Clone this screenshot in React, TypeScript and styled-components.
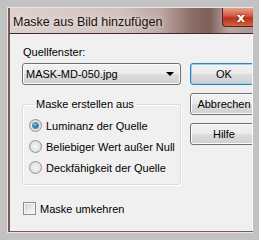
import React from "react";
import styled, { createGlobalStyle } from "styled-components";

const GlobalStyle = createGlobalStyle`
  html, body {
    margin: 0;
    padding: 0;
    background: #c2c2c2;
  }
  body {
    font-family: "Liberation Sans", Arial, sans-serif;
    font-size: 11px;
    color: #000;
  }
`;

const Screen = styled.div`
  width: 259px;
  height: 240px;
  box-sizing: border-box;
  padding: 7px 6px 7px 7px;
  background: #c2c2c2;
  overflow: hidden;
`;

const Window = styled.div`
  height: 100%;
  display: flex;
  flex-direction: column;
  box-sizing: border-box;
  border: 1px solid #e9e4e3;
  border-right: none;
  background: #7a5a54;
  padding: 0 0 1px 2px;
  overflow: hidden;
`;

const TitleBar = styled.div`
  height: 25px;
  flex: none;
  display: flex;
  align-items: flex-start;
  background: linear-gradient(
    90deg,
    #ddd1ce 0%,
    #d2c2be 45%,
    #bca7a2 62%,
    #8c6c66 75%,
    #7e5f59 82%,
    #b9a4a0 90%,
    #ab9692 100%
  );
  border-bottom: 1px solid #3e2a26;
`;

const Title = styled.div`
  padding: 7px 0 0 3px;
  font-size: 12.5px;
  color: #1a1010;
  white-space: nowrap;
  text-shadow: 0 0 6px rgba(255, 255, 255, 0.9);
`;

const CloseButton = styled.div`
  margin-left: auto;
  width: 31px;
  height: 19px;
  flex: none;
  box-sizing: border-box;
  border: 1px solid #4c2820;
  border-top: none;
  border-right: none;
  border-radius: 0 0 0 4px;
  background: linear-gradient(180deg, #e6a08c 0%, #d0583c 45%, #b8301a 55%, #d86040 100%);
  display: flex;
  align-items: center;
  justify-content: center;
  padding-left: 6px;
  color: #fff;
  font-family: "DejaVu Sans", sans-serif;
  font-weight: bold;
  font-size: 13px;
  text-shadow: 0 0 2px #5a1a10;
`;

const Content = styled.div`
  flex: 1;
  background: #f0f0f0;
  border-right: 1px solid #fbfbfb;
  display: grid;
  grid-template-columns: 159px 70px;
  column-gap: 9px;
  padding: 11px 0 0 12px;
  overflow: hidden;
`;

const LeftColumn = styled.div`
  display: flex;
  flex-direction: column;
`;

const RightColumn = styled.div`
  display: flex;
  flex-direction: column;
  gap: 8px;
  padding-top: 18px;
`;

const Label = styled.div`
  height: 14px;
  line-height: 14px;
  padding-left: 1px;
`;

const Select = styled.div`
  margin-top: 4px;
  height: 22px;
  box-sizing: border-box;
  border: 1px solid #707070;
  border-radius: 3px;
  background: linear-gradient(180deg, #f2f2f2 0%, #ebebeb 50%, #dddddd 51%, #cfcfcf 100%);
  box-shadow: inset 0 0 0 1px #fcfcfc;
  display: flex;
  align-items: center;
  padding: 0 6px 0 3px;
`;

const SelectText = styled.span`
  flex: 1;
`;

const Arrow = styled.span`
  width: 0;
  height: 0;
  border-left: 4px solid transparent;
  border-right: 4px solid transparent;
  border-top: 4px solid #000;
`;

const Button = styled.div<{ $default?: boolean }>`
  height: 22px;
  width: 70px;
  box-sizing: border-box;
  border: 1px solid ${(p) => (p.$default ? "#3c7fb1" : "#707070")};
  border-radius: 3px;
  background: linear-gradient(180deg, #f2f2f2 0%, #ebebeb 50%, #dddddd 51%, #cfcfcf 100%);
  box-shadow: inset 0 0 0 1px ${(p) => (p.$default ? "#8ed4f6" : "#fcfcfc")};
  display: flex;
  align-items: center;
  justify-content: center;
  padding-right: 2px;
`;

const Group = styled.fieldset`
  margin: 12px 0 0 0;
  padding: 8px 0 10px 6px;
  border: 1px solid #d5dfe5;
  border-radius: 3px;
  box-shadow: inset 1px 1px 0 #fff, 1px 1px 0 #fff;
  display: flex;
  flex-direction: column;
  gap: 8px;
`;

const Legend = styled.legend`
  padding: 0 2px;
  margin-left: 5px;
  line-height: 14px;
`;

const OptionRow = styled.div`
  display: flex;
  align-items: center;
  gap: 4px;
  height: 13px;
`;

const Radio = styled.span<{ $checked?: boolean }>`
  width: 13px;
  height: 13px;
  box-sizing: border-box;
  border-radius: 50%;
  border: 1px solid #929292;
  background: radial-gradient(circle at 50% 50%, #f4f4f4 0%, #e4e4e4 55%, #c9c9c9 100%);
  display: flex;
  align-items: center;
  justify-content: center;
  &::after {
    content: "";
    width: 5px;
    height: 5px;
    border-radius: 50%;
    display: ${(p) => (p.$checked ? "block" : "none")};
    background: radial-gradient(circle at 40% 35%, #8cc8f0 0%, #2a78b8 50%, #123c6a 100%);
    box-shadow: 0 0 0 1px #5c88b0;
  }
`;

const CheckRow = styled.div`
  margin-top: 17px;
  display: flex;
  align-items: center;
  gap: 4px;
  padding-left: 1px;
`;

const Checkbox = styled.span`
  width: 13px;
  height: 13px;
  box-sizing: border-box;
  border: 1px solid #8e8f8f;
  background: linear-gradient(135deg, #cbcbcb 0%, #e9e9e9 50%, #f8f8f8 100%);
  box-shadow: inset 0 0 0 1px #f4f4f4;
`;

export default function App() {
  return (
    <>
      <GlobalStyle />
      <Screen>
        <Window>
          <TitleBar>
            <Title>Maske aus Bild hinzufügen</Title>
            <CloseButton>x</CloseButton>
          </TitleBar>
          <Content>
            <LeftColumn>
              <Label>Quellfenster:</Label>
              <Select>
                <SelectText>MASK-MD-050.jpg</SelectText>
                <Arrow />
              </Select>
              <Group>
                <Legend>Maske erstellen aus</Legend>
                <OptionRow>
                  <Radio $checked />
                  <span>Luminanz der Quelle</span>
                </OptionRow>
                <OptionRow>
                  <Radio />
                  <span>Beliebiger Wert außer Null</span>
                </OptionRow>
                <OptionRow>
                  <Radio />
                  <span>Deckfähigkeit der Quelle</span>
                </OptionRow>
              </Group>
              <CheckRow>
                <Checkbox />
                <span>Maske umkehren</span>
              </CheckRow>
            </LeftColumn>
            <RightColumn>
              <Button $default>OK</Button>
              <Button>Abbrechen</Button>
              <Button>Hilfe</Button>
            </RightColumn>
          </Content>
        </Window>
      </Screen>
    </>
  );
}
